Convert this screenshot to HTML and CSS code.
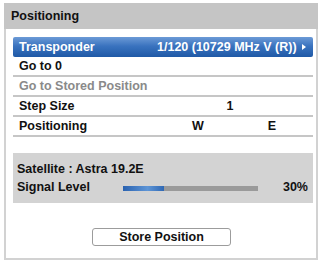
FILE: index.html
```html
<!DOCTYPE html>
<html lang="en">
<head>
    <meta charset="UTF-8">
    <meta name="viewport" content="width=device-width, initial-scale=1.0">
    <title>Positioning</title>
    <link rel="stylesheet" href="styles.css">
</head>
<body>
    <div class="panel">
        <div class="header">Positioning</div>
        <div class="content">
            <div class="menu">
                <div class="row selected">
                    <span class="label">Transponder</span>
                    <span class="value">1/120 (10729 MHz V (R))</span>
                    <span class="arrow"></span>
                </div>
                <div class="row">
                    <span class="label">Go to 0</span>
                    <span class="value"></span>
                </div>
                <div class="row disabled">
                    <span class="label">Go to Stored Position</span>
                    <span class="value"></span>
                </div>
                <div class="row">
                    <span class="label">Step Size</span>
                    <span class="value center">1</span>
                </div>
                <div class="row">
                    <span class="label">Positioning</span>
                    <span class="value dirs"><span>W</span><span>E</span></span>
                </div>
            </div>

            <div class="info">
                <div class="info-line">Satellite : Astra 19.2E</div>
                <div class="info-line signal">
                    <span>Signal Level</span>
                    <span class="bar"><span class="fill" style="width: 30%"></span></span>
                    <span class="pct">30%</span>
                </div>
            </div>

            <div class="actions">
                <button>Store Position</button>
            </div>
        </div>
    </div>
</body>
</html>
```

FILE: styles.css
```css
body { margin: 0; background: #fff; font-family: "Liberation Sans", Arial, sans-serif; font-size: 12.5px; font-weight: bold; color: #111; }
.panel { margin: 3px 3px 0 4px; width: 314px; box-sizing: border-box; border: 2px solid #d2d2d2; border-top: none; background: #fff; }
.header { height: 26px; line-height: 27px; background: #c5c5c5; padding-left: 7px; margin: 0 -2px; }
.content { padding: 8px 3px 12px 7px; }
.row { display: grid; grid-template-columns: 138px 1fr; align-items: center; height: 18px; padding-left: 6px; border-bottom: 2px solid #c6c6c6; }
.row.selected { position: relative; height: 20px; border: none; border-radius: 2px; color: #fff; background: linear-gradient(#6c9ad6, #3a73bf 45%, #1f59a6); }
.row.disabled { color: #8a8a8a; }
.value.center { text-align: center; padding-right: 10px; }
.value.dirs { display: grid; grid-template-columns: 1fr 1fr; text-align: center; padding: 0 4px; }
.arrow { position: absolute; right: 7px; top: 7px; width: 0; height: 0; border-top: 3px solid transparent; border-bottom: 3px solid transparent; border-left: 4px solid #fff; }
.info { margin-top: 16px; background: #d3d3d3; padding: 7px 5px 7px 4px; }
.info-line { height: 18px; line-height: 18px; }
.signal { display: grid; grid-template-columns: 106px 135px 1fr; align-items: center; }
.bar { height: 5px; background: #9a9a9a; margin-top: 2px; }
.fill { display: block; height: 100%; background: linear-gradient(90deg, #2a62b0, #5e95d6 60%, #2f68b4); }
.pct { text-align: right; }
.actions { margin-top: 25px; padding-left: 79px; }
button { display: block; width: 139px; height: 18px; padding: 0; background: #fff; border: 1px solid #9c9c9c; border-radius: 3px; font-family: inherit; font-size: 12.5px; font-weight: bold; color: #111; }
```
